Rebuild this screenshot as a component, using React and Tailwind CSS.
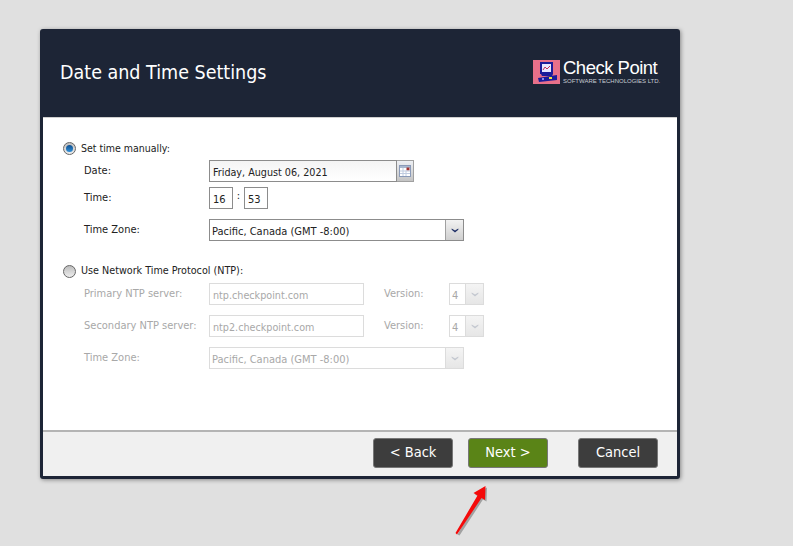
const font = { fontFamily: '"DejaVu Sans Condensed", "DejaVu Sans", sans-serif' };

function Radio({ on }) {
  return (
    <span className="relative w-[13px] h-[13px] shrink-0 rounded-full border border-[#666] bg-gradient-to-b from-[#bdbdbd] to-[#eeeeee] flex items-center justify-center">
      {on && <span className="w-[7px] h-[7px] rounded-full bg-gradient-to-b from-[#0f4f8f] to-[#2f8fd8]" />}
    </span>
  );
}

function Chevron({ color }) {
  return (
    <svg width="8" height="5" viewBox="0 0 9 6">
      <path d="M0.5 0.5 L4.5 3 L8.5 0.5 L8.5 2 L4.5 5.5 L0.5 2 Z" fill={color} />
    </svg>
  );
}

function Select({ width, value, disabled, btn = 18 }) {
  return (
    <div className={`h-[22px] flex border ${disabled ? "border-[#dcdcdc]" : "border-[#8c8c8c]"} bg-white`} style={{ width }}>
      <span className={`flex-1 pl-[2px] leading-[24px] text-[11px] ${disabled ? "text-[#a8a8a8]" : "text-[#222]"}`}>{value}</span>
      <span
        className={`flex items-center justify-center border-l ${disabled ? "border-[#dcdcdc] from-[#f4f4f4] to-[#e6e6e6]" : "border-[#a0a0a0] from-[#f2f2f2] to-[#cfcfcf]"} bg-gradient-to-b`}
        style={{ width: btn }}
      >
        <Chevron color={disabled ? "#c4c8d0" : "#1f2f66"} />
      </span>
    </div>
  );
}

function Row({ label, className, children, disabled }) {
  return (
    <div className={`flex items-center h-[22px] ${className}`}>
      <span className={`w-[127px] shrink-0 pl-[2px] text-[11px] mt-[1px] ${disabled ? "text-[#a8a8a8]" : "text-[#222]"}`}>{label}</span>
      {children}
    </div>
  );
}

function NtpInput({ value }) {
  return (
    <div className="w-[155px] h-[22px] border border-[#dcdcdc] bg-white pl-[3px] leading-[24px] text-[10.7px] text-[#a8a8a8]">{value}</div>
  );
}

function Version() {
  return (
    <>
      <span className="w-[65px] ml-[20px] text-[11px] text-[#a8a8a8] mt-[1px]">Version:</span>
      <Select width={35} value="4" disabled />
    </>
  );
}

function Btn({ children, green }) {
  return (
    <button className={`w-[80px] h-[30px] rounded-[3px] border border-[#777] text-white text-[14.5px] ${green ? "bg-[#5a8417]" : "bg-[#3d3d3d]"}`}>
      {children}
    </button>
  );
}

export default function App() {
  return (
    <div className="relative w-[793px] h-[546px] overflow-hidden bg-[#e0e0e0] pt-[29px] pl-[40px]" style={font}>
      <div className="w-[640px] h-[450px] rounded-[3px] bg-[#1d2536] flex flex-col px-[3px] pb-[3px] shadow-[1px_1px_4px_rgba(0,0,0,0.4)]">
        <header className="h-[88px] shrink-0 flex items-center justify-between pl-[17px] pr-[16px] pb-[3px]">
          <h1 className="text-[19.5px] text-white leading-none mt-[2px]">Date and Time Settings</h1>
          <div className="flex items-center gap-[3px]">
            <svg width="27" height="24" viewBox="0 0 27 24" className="shrink-0">
              <rect width="27" height="24" fill="#e8708a" />
              <rect x="8" y="3" width="11" height="10" fill="#e8e8ff" stroke="#1c1c9a" strokeWidth="2" />
              <path d="M10 10 L12 7 L14 9 L17 6" stroke="#c0305a" strokeWidth="1" fill="none" />
              <path d="M8 14 L20 14 L19 16 L9 16 Z" fill="#1c1c9a" />
              <path d="M5 18 L24 15 L24 20 L6 22 Z" fill="#1c1c9a" />
              <rect x="9" y="18" width="2" height="2" fill="#8c8cf0" />
              <rect x="16" y="17" width="3" height="2" fill="#f0e040" />
            </svg>
            <div className="w-[98px] text-white flex flex-col gap-[2px]" style={{ fontFamily: '"Liberation Sans", sans-serif' }}>
              <div className="text-[18.5px] leading-[17px] tracking-[-0.5px] whitespace-nowrap">Check Point</div>
              <div className="text-[6px] leading-[6px] text-[#c8ccd4] whitespace-nowrap">SOFTWARE TECHNOLOGIES LTD.</div>
            </div>
          </div>
        </header>
        <main className="flex-1 bg-white pt-[23px] pl-[20px] border-t border-[#cfcfcf]">
          <div className="flex items-center gap-[5px] h-[14px] text-[10.5px] text-[#222]">
            <Radio on /> <span className="mt-[1px]">Set time manually:</span>
          </div>
          <Row label="Date:" className="mt-[5px] pl-[19px]">
            <div className="w-[205px] h-[22px] flex">
              <div className="w-[188px] border border-[#8c8c8c] pl-[3px] leading-[24px] text-[10.7px] text-[#222] bg-gradient-to-b from-[#f4f4f4] to-white">Friday, August 06, 2021</div>
              <div className="flex-1 border border-l-0 border-[#a0a0a0] bg-gradient-to-b from-[#eef0f4] to-[#c4c4c4] flex items-center justify-center">
                <svg width="12" height="12" viewBox="0 0 12 12">
                  <rect x="0.5" y="0.5" width="11" height="11" fill="#fff" stroke="#8a9ab8" />
                  <rect x="1" y="1" width="10" height="2" fill="#a8b8d0" />
                  <rect x="7.5" y="2.5" width="3" height="3" fill="#a03030" />
                  <path d="M1 6 H11 M1 8.5 H11 M4 3 V11 M7 5.5 V11" stroke="#c0cce0" />
                </svg>
              </div>
            </div>
          </Row>
          <Row label="Time:" className="mt-[5px] pl-[19px]">
            <div className="w-[24px] h-[22px] border border-[#8c8c8c] pl-[3px] leading-[24px] text-[11px] text-[#222]">16</div>
            <span className="w-[11px] text-center text-[11px] text-[#222] -mt-[3px]">:</span>
            <div className="w-[24px] h-[22px] border border-[#8c8c8c] pl-[3px] leading-[24px] text-[11px] text-[#222]">53</div>
          </Row>
          <Row label="Time Zone:" className="mt-[10px] pl-[19px]">
            <Select width={255} value="Pacific, Canada (GMT -8:00)" />
          </Row>
          <div className="flex items-center gap-[5px] h-[14px] mt-[23px] text-[10.7px] text-[#222]">
            <Radio /> <span className="mt-[1px]">Use Network Time Protocol (NTP):</span>
          </div>
          <Row label="Primary NTP server:" disabled className="mt-[5px] pl-[19px]">
            <NtpInput value="ntp.checkpoint.com" />
            <Version />
          </Row>
          <Row label="Secondary NTP server:" disabled className="mt-[10px] pl-[19px]">
            <NtpInput value="ntp2.checkpoint.com" />
            <Version />
          </Row>
          <Row label="Time Zone:" disabled className="mt-[10px] pl-[19px]">
            <Select width={255} value="Pacific, Canada (GMT -8:00)" disabled />
          </Row>
        </main>
        <footer className="h-[46px] shrink-0 bg-[#f0f0f0] border-t-2 border-[#b4b4b4] flex items-start pt-[6px] pl-[330px]">
          <Btn>&lt; Back</Btn>
          <span className="ml-[15px]"><Btn green>Next &gt;</Btn></span>
          <span className="ml-[30px]"><Btn>Cancel</Btn></span>
        </footer>
      </div>
      <svg className="absolute left-[450px] top-[480px]" width="45" height="60" viewBox="0 0 45 60">
        <path d="M6 53 L27.5 15.5 L23.5 13 L35.5 6 L35 20 L31.5 18 L8 54 Z" fill="#777" transform="translate(1.5 1.5)" opacity="0.6" />
        <path d="M5.5 53 L27.5 15.5 L23.5 13 L35.5 6 L35 20 L31.5 18 L7 54.5 Z" fill="#f50a0a" />
      </svg>
    </div>
  );
}
